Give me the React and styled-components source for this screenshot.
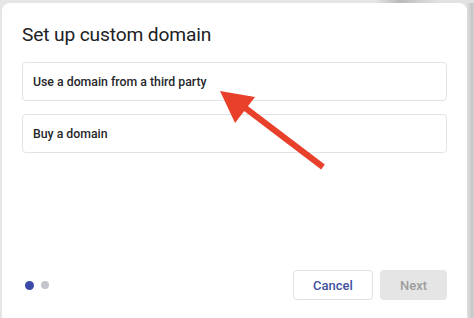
import React from "react";
import styled, { createGlobalStyle } from "styled-components";

const Global = createGlobalStyle`
  html, body { margin: 0; padding: 0; }
  body {
    background: #e4e4e4;
    width: 474px;
    height: 318px;
    overflow: hidden;
    font-family: Roboto, "Liberation Sans", sans-serif;
  }
`;

const Stage = styled.div`
  position: relative;
  width: 474px;
  height: 318px;
  overflow: hidden;
  background: linear-gradient(to right, #e6e6e6 0, #e6e6e6 375px, #b9b9b9 400px, #d6d6d6 425px, #e2e2e2 440px);
  display: flex;
`;

const RightEdge = styled.div`
  width: 7px;
  align-self: stretch;
  margin-top: 3px;
  background: linear-gradient(to right, #dedede 0, #d2d2d2 3px, #c4c4c4 5px, #d6d6d6 7px);
`;

const Card = styled.div`
  margin: 3px 0 0 2px;
  width: 465px;
  height: 330px;
  background: #ffffff;
  border-radius: 8px 8px 0 0;
  padding: 0 20px 0 20px;
  box-sizing: border-box;
  display: flex;
  flex-direction: column;
`;

const Title = styled.h1`
  margin: 0;
  padding: 20px 0 0 0;
  font-family: Roboto, "Liberation Sans", sans-serif;
  font-weight: 400;
  font-size: 19.2px;
  line-height: 24px;
  color: #202124;
  letter-spacing: -0.15px;
`;

const Options = styled.div`
  display: flex;
  flex-direction: column;
  gap: 13px;
  margin-top: 15px;
`;

const Option = styled.div`
  height: 39px;
  box-sizing: border-box;
  border: 1px solid #e1e3e6;
  border-radius: 4px;
  display: flex;
  align-items: center;
  padding-left: 10px;
  font-size: 12.3px;
  font-weight: 500;
  color: #26272a;
  letter-spacing: 0;
`;

const Footer = styled.div`
  display: flex;
  align-items: center;
  justify-content: space-between;
  margin-top: 117px;
`;

const Dots = styled.div`
  display: flex;
  align-items: center;
  gap: 7px;
  padding-left: 3px;
`;

const Dot = styled.span`
  width: ${(p) => (p.$active ? 9 : 8)}px;
  height: ${(p) => (p.$active ? 9 : 8)}px;
  border-radius: 50%;
  background: ${(p) => (p.$active ? "#3a4aa8" : "#c3c4cc")};
`;

const Buttons = styled.div`
  display: flex;
  gap: 7px;
`;

const Button = styled.button`
  height: 30px;
  width: ${(p) => p.$w}px;
  box-sizing: border-box;
  border-radius: 4px;
  font-family: Roboto, "Liberation Sans", sans-serif;
  font-size: 13px;
  font-weight: 500;
  letter-spacing: 0;
  padding: 0;
  border: ${(p) => (p.$primary ? "none" : "1px solid #dfe1e5")};
  background: ${(p) => (p.$primary ? "#e5e5e5" : "#ffffff")};
  color: ${(p) => (p.$primary ? "#9d9d9d" : "#41509f")};
`;

const ArrowLayer = styled.svg`
  position: absolute;
  left: 0;
  top: 0;
  pointer-events: none;
`;

export default function App() {
  return (
    <>
      <Global />
      <Stage>
        <Card>
          <Title>Set up custom domain</Title>
          <Options>
            <Option>Use a domain from a third party</Option>
            <Option>Buy a domain</Option>
          </Options>
          <Footer>
            <Dots>
              <Dot $active />
              <Dot />
            </Dots>
            <Buttons>
              <Button $w={80}>Cancel</Button>
              <Button $w={67} $primary>Next</Button>
            </Buttons>
          </Footer>
        </Card>
        <RightEdge />
        <ArrowLayer width="474" height="318" viewBox="0 0 474 318">
          <line x1="323" y1="167" x2="240" y2="104" stroke="#e8402a" strokeWidth="6" strokeLinecap="butt" />
          <polygon points="220,91 255,97 235,123" fill="#e8402a" />
        </ArrowLayer>
      </Stage>
    </>
  );
}
